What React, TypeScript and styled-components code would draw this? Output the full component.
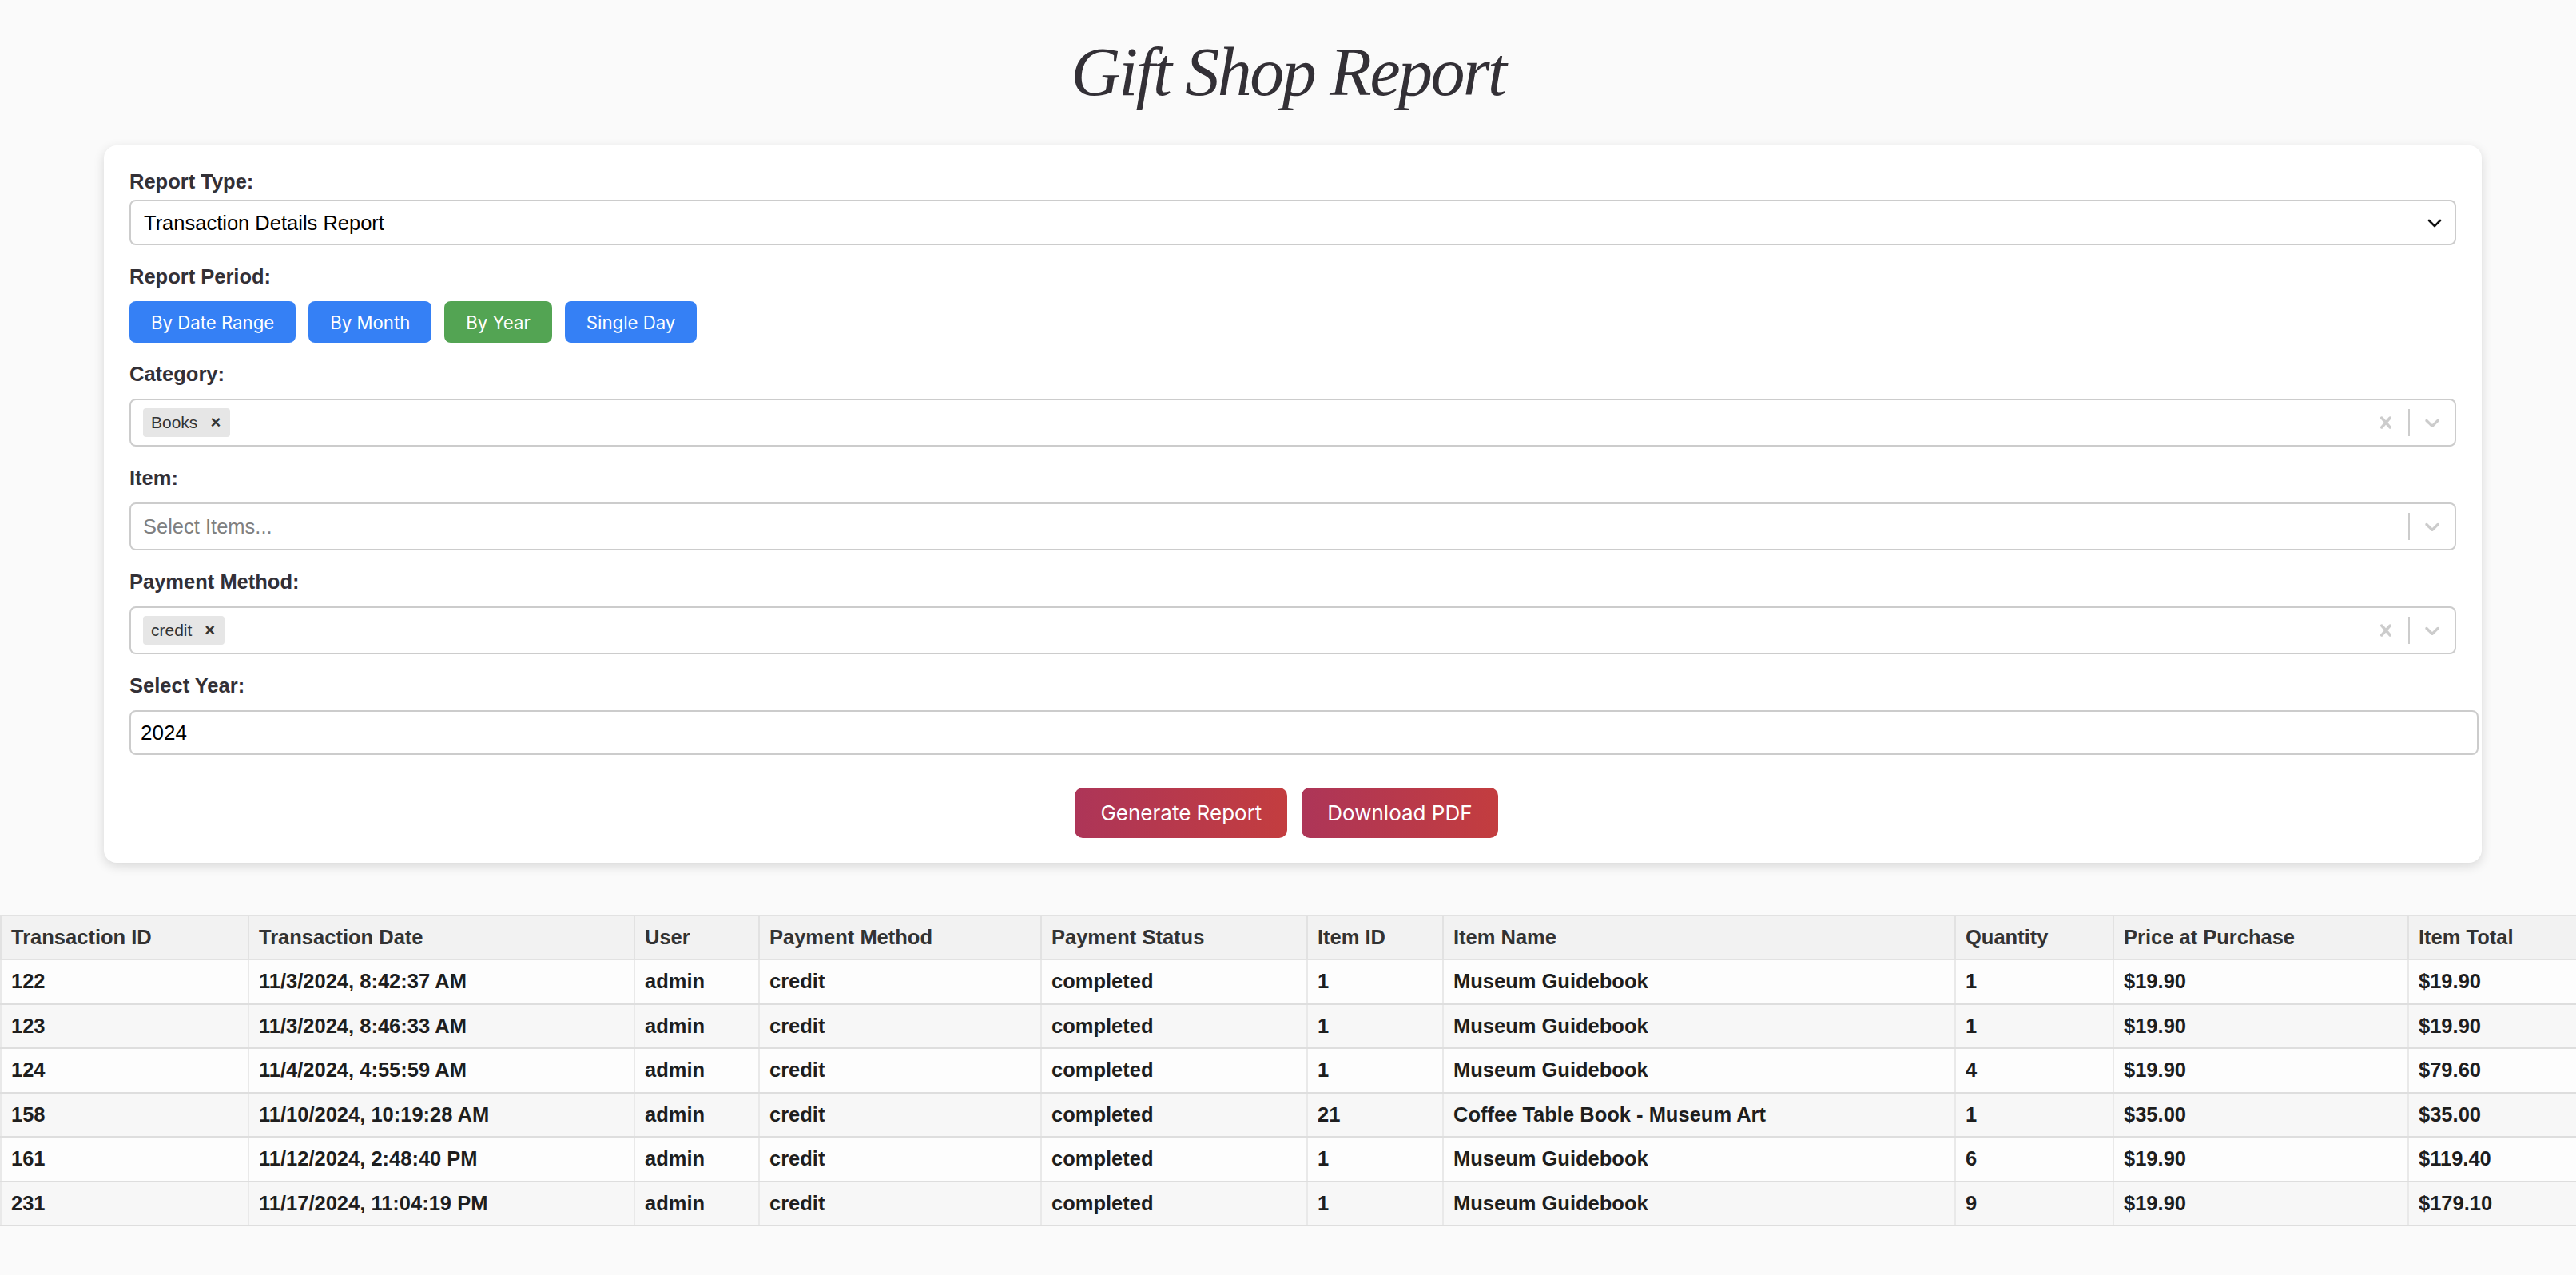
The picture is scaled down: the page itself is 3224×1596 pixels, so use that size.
import React from "react";
import styled, { createGlobalStyle } from "styled-components";

const GlobalStyle = createGlobalStyle`
  html, body {
    margin: 0;
    padding: 0;
    background: #fafafa;
    font-family: "Liberation Sans", Arial, Helvetica, sans-serif;
    color: #333;
  }
  * { box-sizing: border-box; }
`;

const Page = styled.div`
  width: 3224px;
  min-height: 1596px;
  background: #fafafa;
  overflow: hidden;
`;

const Title = styled.h1`
  margin: 40px 0 42px;
  height: 100px;
  line-height: 100px;
  text-align: center;
  font-family: "Liberation Serif", "Times New Roman", serif;
  font-style: italic;
  font-weight: 400;
  font-size: 86px;
  letter-spacing: -2.5px;
  color: #333036;
`;

const Card = styled.section`
  margin-left: 130px;
  width: 2976px;
  background: #ffffff;
  border-radius: 16px;
  box-shadow: 0 4px 14px rgba(0, 0, 0, 0.14);
  padding: 32px 32px 31px;
`;

const FormGroup = styled.div`
  margin-bottom: 27px;
`;

const Label = styled.label<{ $tight?: boolean }>`
  display: block;
  font-size: 25.5px;
  line-height: 24px;
  font-weight: 700;
  color: #333036;
  margin-top: ${(p) => (p.$tight ? 1 : 0)}px;
  margin-bottom: ${(p) => (p.$tight ? 11 : 19)}px;
`;

const SelectWrap = styled.div`
  position: relative;
  width: 100%;
`;

const NativeSelect = styled.select`
  appearance: none;
  -webkit-appearance: none;
  display: block;
  width: 100%;
  height: 57px;
  padding: 0 16px;
  border: 2px solid #cccccc;
  border-radius: 8px;
  background: #ffffff;
  font-family: "Liberation Sans", Arial, sans-serif;
  font-size: 25.5px;
  color: #000;
  outline: none;
`;

const SelectArrow = styled.svg`
  position: absolute;
  right: 18px;
  top: 50%;
  width: 18px;
  height: 11px;
  margin-top: -5px;
  pointer-events: none;
`;

const PeriodRow = styled.div`
  display: flex;
  gap: 16px;
`;

const PeriodButton = styled.button<{ $active?: boolean }>`
  height: 52px;
  padding: 0 27px;
  border: none;
  border-radius: 8px;
  background: ${(p) => (p.$active ? "#53a453" : "#3580f5")};
  color: #ffffff;
  font-family: Inter, "Liberation Sans", sans-serif;
  font-size: 22.2px;
  font-weight: 400;
  cursor: pointer;
`;

const Control = styled.div`
  display: flex;
  align-items: center;
  height: 60px;
  border: 2px solid #cccccc;
  border-radius: 8px;
  background: #ffffff;
`;

const ValueArea = styled.div`
  flex: 1;
  display: flex;
  align-items: center;
  gap: 8px;
  padding-left: 15px;
`;

const Chip = styled.span`
  display: inline-flex;
  align-items: center;
  height: 36px;
  padding: 0 12px 0 10px;
  background: #e6e6e6;
  border-radius: 4px;
  font-size: 21px;
  color: #333;
`;

const ChipRemove = styled.span`
  margin-left: 16px;
  font-size: 22px;
  font-weight: 700;
  color: #333;
`;

const Placeholder = styled.span`
  font-size: 25.5px;
  color: #808080;
`;

const Indicator = styled.div`
  display: flex;
  align-items: center;
  justify-content: center;
  padding: 0 13px;
  height: 100%;
`;

const Separator = styled.span`
  width: 2px;
  height: 34px;
  background: #cccccc;
`;

const TextInput = styled.input`
  box-sizing: content-box;
  display: block;
  width: 100%;
  height: 28px;
  padding: 12px 12px;
  border: 2px solid #cccccc;
  border-radius: 8px;
  font-family: "Liberation Sans", Arial, sans-serif;
  font-size: 26px;
  color: #000;
  outline: none;
`;

const ActionRow = styled.div`
  display: flex;
  justify-content: center;
  gap: 18px;
  margin-top: 41px;
  padding-right: 16px;
`;

const ActionButton = styled.button`
  height: 63px;
  padding: 0 32px;
  border: none;
  border-radius: 10px;
  background: linear-gradient(90deg, #ad3558 0%, #c33d3f 100%);
  color: #ffffff;
  font-family: Inter, "Liberation Sans", sans-serif;
  font-size: 26px;
  font-weight: 400;
  cursor: pointer;
`;

const Table = styled.table`
  margin-top: 65px;
  width: 3224px;
  table-layout: fixed;
  border-collapse: collapse;
  font-family: "Liberation Sans", Arial, sans-serif;
  font-size: 25.5px;
`;

const Th = styled.th`
  text-align: left;
  font-weight: 700;
  color: #333;
  background: #f2f2f2;
  padding: 12px 12px;
  line-height: 29px;
  border: 2px solid #e2e2e2;
  white-space: nowrap;
  overflow: hidden;
`;

const Tr = styled.tr<{ $odd: boolean }>`
  background: ${(p) => (p.$odd ? "#fdfdfd" : "#f7f7f7")};
`;

const Td = styled.td`
  padding: 12px 12px;
  line-height: 29.5px;
  font-weight: 700;
  color: #1e1e1e;
  border-left: 2px solid #e9e9e9;
  border-right: 2px solid #e9e9e9;
  border-bottom: 2px solid #dedede;
  white-space: nowrap;
  overflow: hidden;
`;

const CrossIcon = () => (
  <svg width="30" height="30" viewBox="0 0 20 20" fill="#cccccc" aria-hidden="true">
    <path d="M14.348 14.849c-0.469 0.469-1.229 0.469-1.697 0l-2.651-3.030-2.651 3.029c-0.469 0.469-1.229 0.469-1.697 0-0.469-0.469-0.469-1.229 0-1.697l2.758-3.15-2.759-3.152c-0.469-0.469-0.469-1.228 0-1.697s1.228-0.469 1.697 0l2.652 3.031 2.651-3.031c0.469-0.469 1.228-0.469 1.697 0s0.469 1.229 0 1.697l-2.758 3.152 2.758 3.15c0.469 0.469 0.469 1.229 0 1.698z" />
  </svg>
);

const ChevronIcon = () => (
  <svg width="30" height="30" viewBox="0 0 20 20" fill="#cccccc" aria-hidden="true">
    <path d="M4.516 7.548c0.436-0.446 1.043-0.481 1.576 0l3.908 3.747 3.908-3.747c0.533-0.481 1.141-0.446 1.574 0 0.436 0.445 0.408 1.197 0 1.615-0.406 0.418-4.695 4.502-4.695 4.502-0.217 0.223-0.502 0.335-0.787 0.335s-0.57-0.112-0.789-0.335c0 0-4.287-4.084-4.695-4.502s-0.436-1.17 0-1.615z" />
  </svg>
);

const MultiSelect: React.FC<{ chips?: string[]; placeholder?: string }> = ({ chips = [], placeholder }) => (
  <Control>
    <ValueArea>
      {chips.length === 0 && placeholder ? <Placeholder>{placeholder}</Placeholder> : null}
      {chips.map((c) => (
        <Chip key={c}>
          {c}
          <ChipRemove>×</ChipRemove>
        </Chip>
      ))}
    </ValueArea>
    {chips.length > 0 ? (
      <Indicator>
        <CrossIcon />
      </Indicator>
    ) : null}
    <Separator />
    <Indicator>
      <ChevronIcon />
    </Indicator>
  </Control>
);

const columns = [
  { name: "Transaction ID", width: 310 },
  { name: "Transaction Date", width: 483 },
  { name: "User", width: 156 },
  { name: "Payment Method", width: 353 },
  { name: "Payment Status", width: 333 },
  { name: "Item ID", width: 170 },
  { name: "Item Name", width: 641 },
  { name: "Quantity", width: 198 },
  { name: "Price at Purchase", width: 369 },
  { name: "Item Total", width: 211 },
];

const rows = [
  ["122", "11/3/2024, 8:42:37 AM", "admin", "credit", "completed", "1", "Museum Guidebook", "1", "$19.90", "$19.90"],
  ["123", "11/3/2024, 8:46:33 AM", "admin", "credit", "completed", "1", "Museum Guidebook", "1", "$19.90", "$19.90"],
  ["124", "11/4/2024, 4:55:59 AM", "admin", "credit", "completed", "1", "Museum Guidebook", "4", "$19.90", "$79.60"],
  ["158", "11/10/2024, 10:19:28 AM", "admin", "credit", "completed", "21", "Coffee Table Book - Museum Art", "1", "$35.00", "$35.00"],
  ["161", "11/12/2024, 2:48:40 PM", "admin", "credit", "completed", "1", "Museum Guidebook", "6", "$19.90", "$119.40"],
  ["231", "11/17/2024, 11:04:19 PM", "admin", "credit", "completed", "1", "Museum Guidebook", "9", "$19.90", "$179.10"],
];

export default function App() {
  return (
    <Page>
      <GlobalStyle />
      <Title>Gift Shop Report</Title>
      <Card>
        <FormGroup>
          <Label $tight>Report Type:</Label>
          <SelectWrap>
            <NativeSelect defaultValue="details">
              <option value="details">Transaction Details Report</option>
              <option value="summary">Sales Summary Report</option>
            </NativeSelect>
            <SelectArrow viewBox="0 0 18 11" aria-hidden="true">
              <polyline points="2,2 9,9 16,2" fill="none" stroke="#111" strokeWidth="2.6" strokeLinecap="round" strokeLinejoin="round" />
            </SelectArrow>
          </SelectWrap>
        </FormGroup>
        <FormGroup>
          <Label>Report Period:</Label>
          <PeriodRow>
            <PeriodButton>By Date Range</PeriodButton>
            <PeriodButton>By Month</PeriodButton>
            <PeriodButton $active>By Year</PeriodButton>
            <PeriodButton>Single Day</PeriodButton>
          </PeriodRow>
        </FormGroup>
        <FormGroup>
          <Label>Category:</Label>
          <MultiSelect chips={["Books"]} />
        </FormGroup>
        <FormGroup>
          <Label>Item:</Label>
          <MultiSelect placeholder="Select Items..." />
        </FormGroup>
        <FormGroup>
          <Label>Payment Method:</Label>
          <MultiSelect chips={["credit"]} />
        </FormGroup>
        <FormGroup>
          <Label>Select Year:</Label>
          <TextInput type="text" defaultValue="2024" />
        </FormGroup>
        <ActionRow>
          <ActionButton>Generate Report</ActionButton>
          <ActionButton>Download PDF</ActionButton>
        </ActionRow>
      </Card>
      <Table>
        <colgroup>
          {columns.map((c) => (
            <col key={c.name} style={{ width: c.width }} />
          ))}
        </colgroup>
        <thead>
          <tr>
            {columns.map((c) => (
              <Th key={c.name}>{c.name}</Th>
            ))}
          </tr>
        </thead>
        <tbody>
          {rows.map((r, i) => (
            <Tr key={r[0]} $odd={i % 2 === 0}>
              {r.map((cell, j) => (
                <Td key={j}>{cell}</Td>
              ))}
            </Tr>
          ))}
        </tbody>
      </Table>
    </Page>
  );
}
